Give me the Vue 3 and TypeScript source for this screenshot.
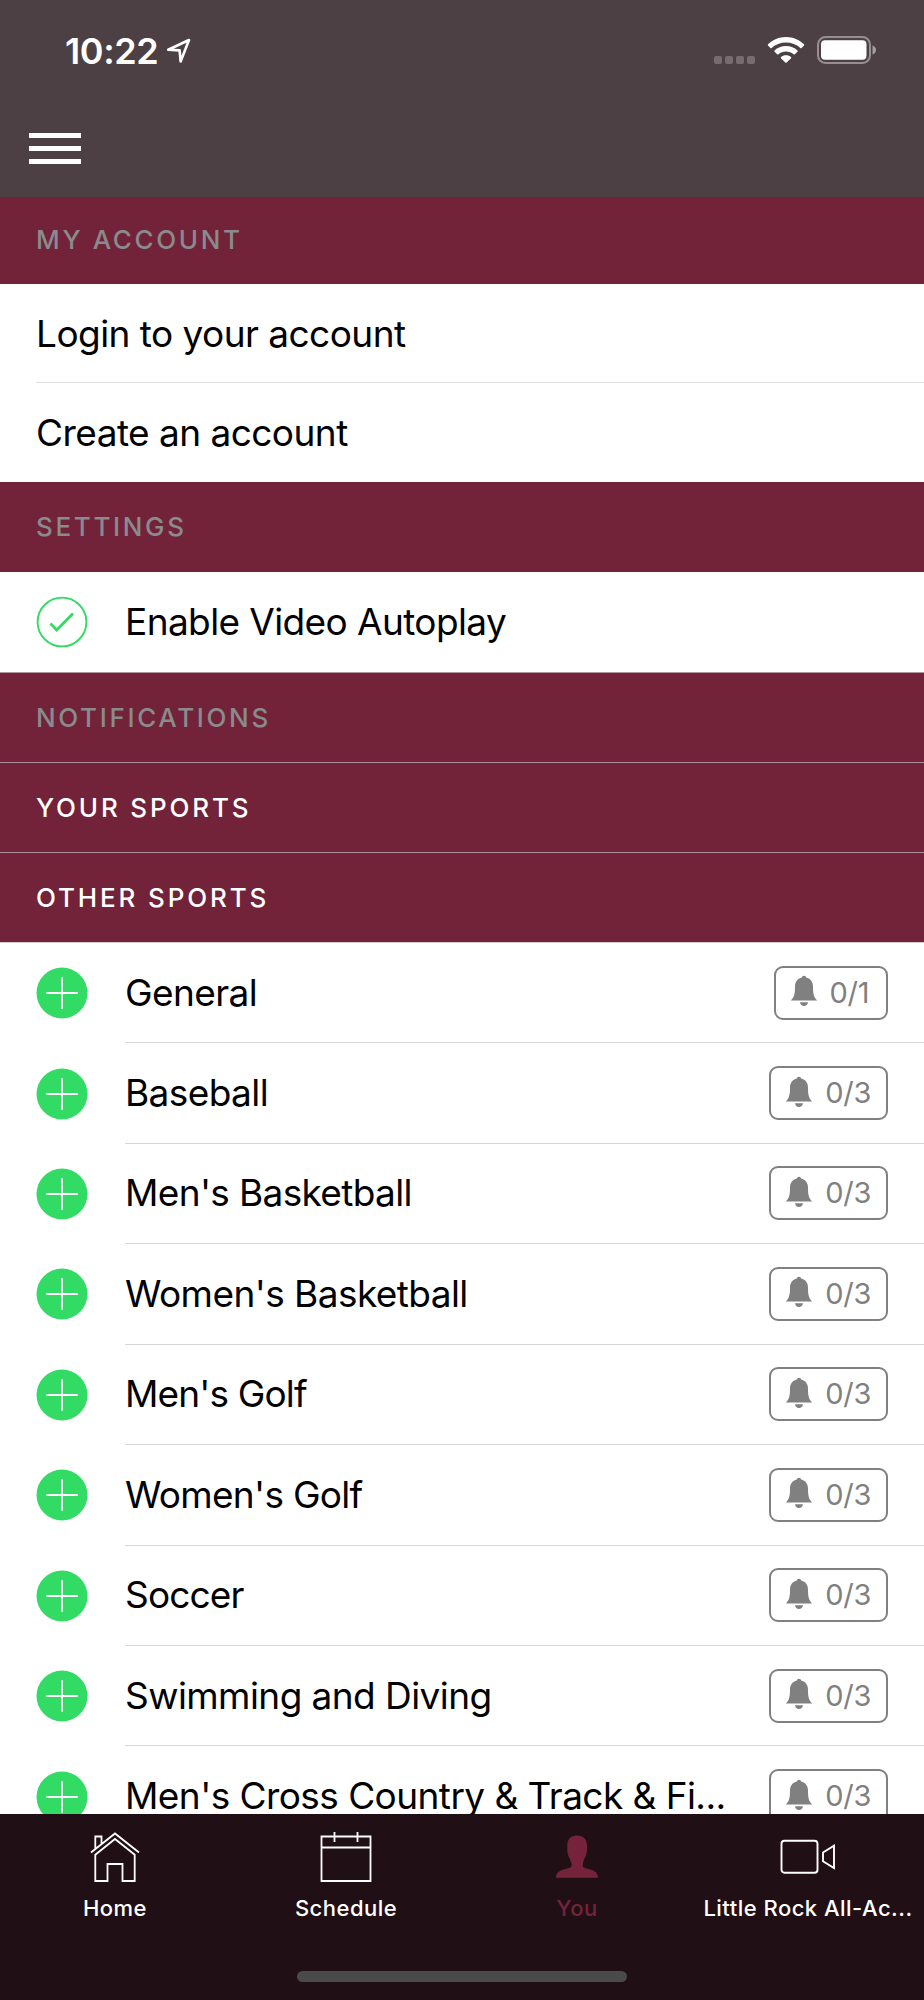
<script setup lang="ts">
interface Sport {
  name: string
  count: string
  tracking: number
}

const sports: Sport[] = [
  { name: 'General', count: '0/1', tracking: -0.6 },
  { name: 'Baseball', count: '0/3', tracking: -0.6 },
  { name: "Men's Basketball", count: '0/3', tracking: -0.65 },
  { name: "Women's Basketball", count: '0/3', tracking: -0.57 },
  { name: "Men's Golf", count: '0/3', tracking: -0.85 },
  { name: "Women's Golf", count: '0/3', tracking: -0.72 },
  { name: 'Soccer', count: '0/3', tracking: -0.85 },
  { name: 'Swimming and Diving', count: '0/3', tracking: -0.57 },
  { name: "Men's Cross Country & Track & Fi...", count: '0/3', tracking: -0.56 },
]
</script>

<template>
  <div class="screen">
    <header class="top">
      <div class="status">
        <div class="clock">
          <span class="time">10:22</span>
          <svg class="location" width="26" height="26" viewBox="0 0 26 26">
            <path d="M2.200 11.800 23 2 14.600 23.400 13.600 12.400Z" fill="none" stroke="#fff" stroke-width="2.600" stroke-linejoin="round" />
          </svg>
        </div>
        <div class="signals">
          <div class="dots"><i /><i /><i /><i /></div>
          <svg class="wifi" width="38" height="28" viewBox="0 0 38 28">
            <g fill="#fff">
              <path d="M19 1C26 1 32.300 3.800 37 8.300Q37.500 9 37 9.600L34.600 12Q34 12.500 33.300 12C29.500 8.600 24.500 6.600 19 6.600S8.500 8.600 4.700 12Q4 12.500 3.400 12L1 9.600Q.5 9 1 8.300C5.700 3.800 12 1 19 1Z" />
              <path d="M19 10C23.500 10 27.500 11.700 30.500 14.500Q31 15.200 30.500 15.800L27.800 18.300Q27.200 18.800 26.500 18.300C24.500 16.500 21.900 15.500 19 15.500S13.500 16.500 11.500 18.300Q10.800 18.800 10.200 18.300L7.500 15.800Q7 15.200 7.500 14.500C10.500 11.700 14.500 10 19 10Z" />
              <path d="M19 19.200C21 19.200 22.700 19.800 24 20.900Q24.500 21.600 24 22.200L19.700 26.500Q19 27 18.300 26.500L14 22.200Q13.500 21.600 14 20.900C15.300 19.800 17 19.200 19 19.200Z" />
            </g>
          </svg>
          <svg class="battery" width="60" height="28" viewBox="0 0 60 28">
            <rect x="1" y="1" width="52" height="26" rx="7.500" fill="none" stroke="#968e91" stroke-width="2" />
            <rect x="4" y="4.300" width="45.500" height="19.400" rx="4" fill="#fff" />
            <path d="M55.500 9.500Q59 11 59 14T55.500 18.500Z" fill="#a69fa1" />
          </svg>
        </div>
      </div>
      <div class="menu"><i /><i /><i /></div>
    </header>

    <main class="content">
      <h2 class="section first">MY ACCOUNT</h2>
      <div class="link">Login to your account</div>
      <div class="link last">Create an account</div>
      <h2 class="section">SETTINGS</h2>
      <div class="row setting">
        <svg class="mark" width="52" height="52" viewBox="0 0 52 52">
          <circle cx="26" cy="26" r="24.400" fill="none" stroke="#32dc64" stroke-width="1.900" />
          <path d="M14.500 27.500 20.700 34 37 17.500" fill="none" stroke="#32dc64" stroke-width="2.800" />
        </svg>
        <span class="name">Enable Video Autoplay</span>
      </div>
      <h2 class="section notifications">NOTIFICATIONS</h2>
      <h2 class="section light ruled">YOUR SPORTS</h2>
      <h2 class="section light ruled">OTHER SPORTS</h2>
      <div class="sports">
        <div v-for="sport in sports" :key="sport.name" class="row">
          <svg class="mark" width="52" height="52" viewBox="0 0 52 52">
            <circle cx="26" cy="26" r="25.500" fill="#32dc64" />
            <path d="M10.300 26H41.700M26 10.300V41.700" stroke="#fff" stroke-width="1.900" />
          </svg>
          <div class="body">
            <span class="name" :style="{ letterSpacing: sport.tracking + 'px' }">{{ sport.name }}</span>
            <span class="badge">
              <svg class="bell" width="28" height="32" viewBox="0 0 28 32">
                <path d="M14 .8C15.200 .8 15.900 1.500 16.100 2.500C20.600 3.500 23 7 23 11.500C23 18.500 23.600 22 27.200 25.600H.8C4.400 22 5 18.500 5 11.500C5 7 7.400 3.500 11.900 2.500C12.100 1.500 12.800 .8 14 .8ZM10 27.200H18Q17.300 31 14 31T10 27.200Z" fill="#808080" />
              </svg>
              <span class="count">{{ sport.count }}</span>
            </span>
          </div>
        </div>
      </div>
    </main>

    <nav class="tabs">
      <div class="tab">
        <svg width="58" height="58" viewBox="0 0 58 58" fill="none" stroke="#fff" stroke-width="1.800">
          <path d="M5 27.500 29 8.500 53 27.500M9.300 23.500V11.500H15.500V18.500" />
          <path d="M9.300 29.800 29 14 48.700 29.800V56H36.500V39H21.500V56H9.300Z" />
        </svg>
        <span class="label">Home</span>
      </div>
      <div class="tab">
        <svg width="58" height="58" viewBox="0 0 58 58" fill="none" stroke="#fff" stroke-width="1.800">
          <path d="M4.500 11.500H53.500V56H4.500ZM4.500 22.500H53.500M17.500 7V17M40.500 7V17" />
        </svg>
        <span class="label">Schedule</span>
      </div>
      <div class="tab active">
        <svg width="58" height="58" viewBox="0 0 58 58">
          <path d="M29 10.500C35.500 10.500 39 14.500 39 20.500V24.500C39 29 37.500 31 36.300 34C35.200 37 34.800 38 34.800 41C35.500 45.500 49.500 42 50 52.700H8C8.500 42 22.500 45.500 23.600 41C23.600 38 23 37 21.800 34C20.500 31 19.300 29 19.300 24.500V20.500C19.300 14.500 22.500 10.500 29 10.500Z" fill="#75233c" />
        </svg>
        <span class="label">You</span>
      </div>
      <div class="tab">
        <svg width="58" height="58" viewBox="0 0 58 58" fill="none" stroke="#fff" stroke-width="1.900">
          <rect x="2.500" y="15.700" width="36" height="32" rx="3" />
          <path d="M44 27.500 55 20.700V43L44 36.200Z" />
        </svg>
        <span class="label">Little Rock All-Ac...</span>
      </div>
      <div class="indicator" />
    </nav>
  </div>
</template>

<style>
body {
  margin: 0;
}
</style>

<style scoped>
.screen {
  width: 924px;
  height: 2000px;
  display: flex;
  flex-direction: column;
  overflow: hidden;
  background: #fff;
  color: #000;
  font-family: Inter, "Liberation Sans", sans-serif;
}
.top {
  height: 197px;
  flex: none;
  box-sizing: border-box;
  background: #4d4044;
}
.status {
  height: 133px;
  box-sizing: border-box;
  padding: 0 47px 0 65px;
  display: flex;
  justify-content: space-between;
}
.clock,
.signals {
  display: flex;
  align-items: flex-start;
}
.time {
  margin-top: 29px;
  width: 94px;
  color: #fff;
  font-size: 36px;
  font-weight: 600;
  line-height: 44px;
  letter-spacing: -0.4px;
  white-space: nowrap;
}
.location {
  margin: 37.5px 0 0 7px;
}
.dots {
  display: flex;
  gap: 3.5px;
  margin-top: 56px;
}
.dots i {
  width: 7.6px;
  height: 7.6px;
  border-radius: 2px;
  background: #766b6f;
}
.wifi {
  margin: 36px 0 0 12px;
}
.battery {
  margin: 36px 0 0 12px;
}
.menu {
  display: flex;
  flex-direction: column;
  gap: 8px;
  padding-left: 29px;
}
.menu i {
  width: 52px;
  height: 5px;
  background: #fff;
}
.content {
  height: 1617px;
  flex: none;
  overflow: hidden;
}
.section {
  margin: 0;
  height: 90px;
  box-sizing: border-box;
  padding-left: 36px;
  background: #72233a;
  color: #8a8b8d;
  font-size: 26px;
  font-weight: 450;
  line-height: 90px;
  letter-spacing: 2.65px;
}
.first {
  height: 87px;
  line-height: 86px;
}
.notifications {
  height: 89px;
}
.light {
  color: #fff;
  font-weight: 500;
  letter-spacing: 2.85px;
}
.ruled {
  border-top: 1px solid #ae8c98;
}
.link {
  height: 99px;
  box-sizing: border-box;
  margin-left: 36px;
  border-bottom: 1px solid #e0e0e0;
  font-size: 37px;
  line-height: 99px;
  letter-spacing: -0.54px;
}
.link.last {
  border-bottom: 0;
}
.row {
  height: 100.44px;
  display: flex;
  align-items: center;
}
.setting {
  height: 101px;
  box-sizing: border-box;
  border-bottom: 1px solid #b493a0;
}
.sports {
  padding-top: 0.9px;
  box-shadow: inset 0 1px #d8ccd0;
}
.mark {
  margin: 0 37px 0 36px;
  flex: none;
}
.body {
  height: 100%;
  flex: 1;
  box-sizing: border-box;
  padding: 0 36px 0 0;
  border-bottom: 1px solid #d6d6d6;
  display: flex;
  align-items: center;
  justify-content: space-between;
}
.name {
  font-size: 37px;
  line-height: 50px;
  letter-spacing: -0.6px;
  white-space: nowrap;
}
.badge {
  height: 54px;
  box-sizing: border-box;
  padding: 0 15px 0 14px;
  border: 2px solid #808080;
  border-radius: 9px;
  display: flex;
  align-items: center;
  gap: 12px;
  color: #808080;
}
.bell {
  margin-top: -3px;
}
.count {
  min-width: 41.5px;
  font-size: 29px;
  line-height: 50px;
  letter-spacing: -0.3px;
}
.tabs {
  height: 186px;
  flex: none;
  display: grid;
  grid-template-columns: repeat(4, 231px);
  grid-template-rows: 157px 11px;
  background: #201015;
}
.tab {
  display: flex;
  flex-direction: column;
  align-items: center;
  padding: 11px 1px 0 0;
  color: #fff;
}
.label {
  margin-top: 9px;
  font-size: 22px;
  font-weight: 500;
  line-height: 32px;
  letter-spacing: 0.48px;
  white-space: nowrap;
}
.active {
  color: #75233c;
}
.indicator {
  grid-column: 1 / 5;
  justify-self: center;
  width: 330px;
  height: 11px;
  border-radius: 6px;
  background: #4a4a4a;
}
</style>
